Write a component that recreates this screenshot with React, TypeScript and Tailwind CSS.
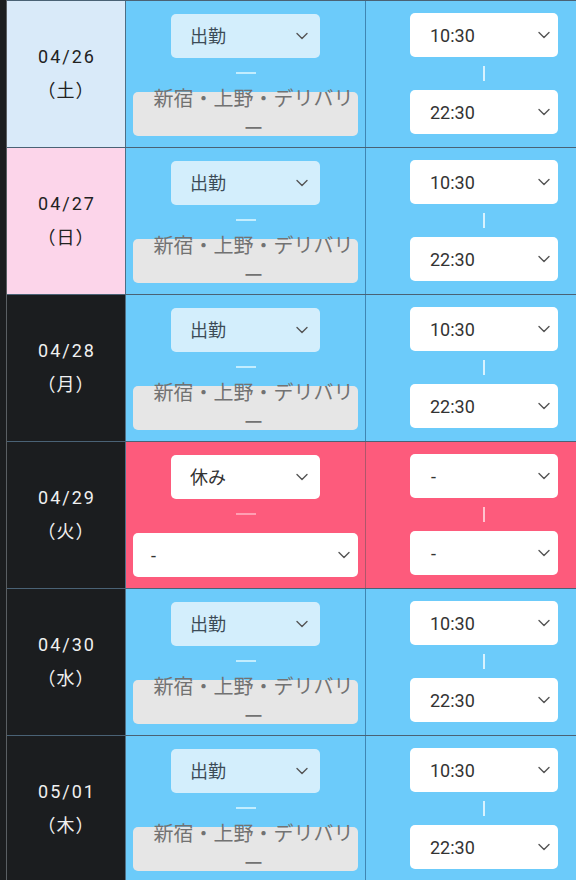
import React from "react";

type Row = {
  date: string;
  dow: string;
  kind: "sat" | "sun" | "wd";
  off?: boolean;
};

const rows: Row[] = [
  { date: "04/26", dow: "（土）", kind: "sat" },
  { date: "04/27", dow: "（日）", kind: "sun" },
  { date: "04/28", dow: "（月）", kind: "wd" },
  { date: "04/29", dow: "（火）", kind: "wd", off: true },
  { date: "04/30", dow: "（水）", kind: "wd" },
  { date: "05/01", dow: "（木）", kind: "wd" },
];

const font = { fontFamily: 'Roboto, "Noto Sans CJK JP", sans-serif' };

function Chevron() {
  return (
    <svg width="12" height="8" viewBox="0 0 12 8" className="shrink-0">
      <path d="M1 1.5 L6 6.5 L11 1.5" fill="none" stroke="#555" strokeWidth="1.4" strokeLinecap="round" strokeLinejoin="round" />
    </svg>
  );
}

function DateCell({ row }: { row: Row }) {
  const bg =
    row.kind === "sat"
      ? "bg-[#d9eaf9] text-[#222]"
      : row.kind === "sun"
      ? "bg-[#fcd5ea] text-[#222]"
      : "bg-[#1b1d1f] text-[#f0f0f0]";
  return (
    <div className={`w-[119px] shrink-0 flex flex-col items-center justify-center border-r border-[#4d6f86] ${bg}`}>
      <div className="text-[18px] leading-[34px] tracking-[2px] pl-[2px]">{row.date}</div>
      <div className="text-[18px] leading-[34px] tracking-[1px]">{row.dow}</div>
    </div>
  );
}

function MiddleCell({ row }: { row: Row }) {
  if (row.off) {
    return (
      <div className="w-[240px] shrink-0 bg-[#fd5b7c] border-r border-[#b0556a] flex flex-col items-center pt-[13px]">
        <div className="w-[149px] h-[44px] rounded-[5px] bg-white flex items-center justify-between pl-[19px] pr-[12px]">
          <span className="text-[18px] text-[#333]">休み</span>
          <Chevron />
        </div>
        <div className="h-[2px] w-[20px] bg-[#ff9fb3] mt-[14px]" />
        <div className="w-[225px] h-[44px] mt-[18px] rounded-[5px] bg-white flex items-center justify-between pl-[18px] pr-[8px]">
          <span className="text-[18px] text-[#333]">-</span>
          <Chevron />
        </div>
      </div>
    );
  }
  return (
    <div className="w-[240px] shrink-0 bg-[#6ccbfa] border-r border-[#3f86b3] flex flex-col items-center pt-[13px]">
      <div className="w-[149px] h-[44px] rounded-[5px] bg-[#d3eefc] flex items-center justify-between pl-[19px] pr-[12px]">
        <span className="text-[18px] text-[#3c4b57]">出勤</span>
        <Chevron />
      </div>
      <div className="h-[2px] w-[20px] bg-[#c3edfe] mt-[14px]" />
      <div className="w-[225px] h-[44px] mt-[18px] rounded-[5px] bg-[#e6e6e6] flex items-center justify-center pl-[16px]">
        <div className="w-full text-center text-[20px] leading-[30px] text-[#727272] break-all">
          新宿・上野・デリバリー
        </div>
      </div>
    </div>
  );
}

function TimeSelect({ value }: { value: string }) {
  return (
    <div className="w-[148px] h-[44px] rounded-[5px] bg-white flex items-center justify-between pl-[20px] pr-[8px]">
      <span className={`text-[18px] text-[#333] ${value === "-" ? "pl-[1px]" : ""}`}>{value}</span>
      <Chevron />
    </div>
  );
}

function RightCell({ row }: { row: Row }) {
  const off = !!row.off;
  return (
    <div className={`flex-1 flex flex-col pt-[12px] pl-[44px] ${off ? "bg-[#fd5b7c]" : "bg-[#6ccbfa]"}`}>
      <TimeSelect value={off ? "-" : "10:30"} />
      <div className="w-[148px] flex justify-center">
        <div className={`w-[2px] h-[15px] mt-[9px] mb-[9px] ${off ? "bg-[#ffc3cf]" : "bg-[#d8f2fe]"}`} />
      </div>
      <TimeSelect value={off ? "-" : "22:30"} />
    </div>
  );
}

export default function App() {
  return (
    <div className="w-[576px] h-[880px] overflow-hidden bg-[#1b1d1f] flex" style={font}>
      <div className="w-[6px] shrink-0 bg-[#1b1d1f]" />
      <div className="flex-1 flex flex-col border-l border-[#5a5f63]">
        {rows.map((r, i) => (
          <div key={i} className="h-[147px] shrink-0 flex border-t border-[#4a6275]">
            <DateCell row={r} />
            <MiddleCell row={r} />
            <RightCell row={r} />
          </div>
        ))}
      </div>
    </div>
  );
}
